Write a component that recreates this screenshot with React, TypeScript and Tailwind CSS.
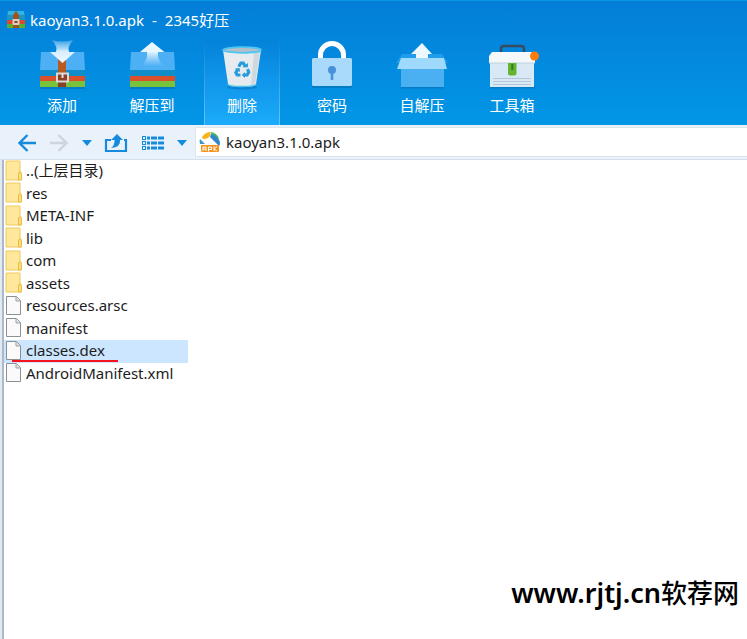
import React from "react";

const uiFont = "font-['Noto_Sans','Noto_Sans_CJK_SC',sans-serif]";

function AppIcon() {
  return (
    <svg viewBox="0 0 20 18" className="h-[18px] w-5 shrink-0" aria-hidden="true">
      <path d="M2 0h16l1 9H1z" fill="#2fb4e4" />
      <path d="M1 4h18v5H1z" fill="#1c95c4" />
      <path d="M1 9h18v4H1z" fill="#d94b2b" />
      <path d="M1 13h18v4H1z" fill="#55b02e" />
      <path d="M10 0L7 4v13h6V4z" fill="#a4521b" />
      <rect x="6.500" y="8" width="7" height="6" rx="1" fill="#d9cfc5" />
      <rect x="8.500" y="10" width="3" height="2" fill="#8b4a2c" />
    </svg>
  );
}

function ArchiveBody() {
  return (
    <>
      <rect x="8" y="38" width="45" height="2" fill="#0568a8" opacity="0.5" />
      <path d="M9 3h43l1 18H8z" fill="#4db0f5" />
      <path d="M8 21h45v6H8z" fill="#118dc9" />
      <path d="M8 27h45v5H8z" fill="#dc4f2b" />
      <path d="M8 32h45v6H8z" fill="#78c33b" />
    </>
  );
}

function AddIcon() {
  return (
    <svg viewBox="0 -10 60 52" className="h-[52px] w-[60px]" aria-hidden="true">
      <defs>
        <linearGradient id="down" x1="0" y1="0" x2="0" y2="1">
          <stop offset="0" stopColor="#bfe2ff" stopOpacity="0.3" />
          <stop offset="0.5" stopColor="#d8eeff" />
          <stop offset="1" stopColor="#eef9ff" />
        </linearGradient>
      </defs>
      <ArchiveBody />
      <path d="M26 10h8v28h-8z" fill="#b95b20" />
      <path d="M26 30h8v8h-8z" fill="#864127" />
      <path d="M20 -9Q30 -6 41 -9Q35 -2 37 3h6L30.500 14 18 3h6Q26 -2 20 -9z" fill="url(#down)" />
      <rect x="25" y="24.500" width="11" height="8" fill="#8c4028" stroke="#d8d8d5" strokeWidth="2" />
      <path d="M30.500 24v5" stroke="#e5e3df" strokeWidth="2" />
    </svg>
  );
}

function ExtractIcon() {
  return (
    <svg viewBox="0 -10 60 52" className="h-[52px] w-[60px]" aria-hidden="true">
      <defs>
        <linearGradient id="up" x1="0" y1="0" x2="0" y2="1">
          <stop offset="0.400" stopColor="#e8f6ff" />
          <stop offset="1" stopColor="#c8e8ff" stopOpacity="0" />
        </linearGradient>
      </defs>
      <ArchiveBody />
      <path d="M30 -7L42.500 3H36Q35 10 41 17H20Q26 10 25 3h-7z" fill="url(#up)" />
    </svg>
  );
}

function DeleteIcon() {
  return (
    <svg viewBox="0 -10 60 52" className="h-[52px] w-[60px]" aria-hidden="true">
      <ellipse cx="30" cy="38" rx="15" ry="2.500" fill="#086bb4" opacity="0.5" />
      <path d="M11 1l5 34q0 3 14 3t14-3l5-34z" fill="#e6ebef" />
      <path d="M42 3h6l-5 32-4 2z" fill="#d0d8df" />
      <path d="M16 35q0 2.500 14 2.500T44 35" fill="none" stroke="#4ec4ed" strokeWidth="1.500" />
      <ellipse cx="30" cy="1" rx="19" ry="2.800" fill="#b4bfc8" stroke="#50c6f2" strokeWidth="1.800" />
      <g transform="translate(5.200 3.600) scale(0.830)">
        <g fill="none" stroke="#299bdc" strokeWidth="3.800">
          <path d="M26 17l2.500-4.500h3L34 17" />
          <path d="M36.500 20l1.500 3.500-2 3.500h-4" />
          <path d="M28 27h-4l-1.500-3L25 20" />
        </g>
        <path d="M30.500 17.500h6.500v-5z" fill="#299bdc" />
        <path d="M33.500 23.500v7l-4-3.500z" fill="#299bdc" />
        <path d="M21 19.500l6-1 .5 5z" fill="#299bdc" />
      </g>
    </svg>
  );
}

function LockIcon() {
  return (
    <svg viewBox="0 -10 60 52" className="h-[52px] w-[60px]" aria-hidden="true">
      <rect x="10" y="10" width="40" height="29" rx="1" fill="#0568a8" opacity="0.5" />
      <path d="M18.500 12V6a11.500 11.500 0 0123 0v6" fill="none" stroke="#fff" strokeWidth="5" />
      <rect x="10" y="9" width="40" height="28" rx="1.500" fill="#a9dafc" />
      <circle cx="30" cy="21" r="4" fill="#4b91d7" />
      <path d="M28.700 23h2.600v8h-2.600z" fill="#4b91d7" />
    </svg>
  );
}

function SelfExtractIcon() {
  return (
    <svg viewBox="0 -10 60 52" className="h-[52px] w-[60px]" aria-hidden="true">
      <rect x="9" y="37" width="43" height="2.500" fill="#0568a8" opacity="0.5" />
      <path d="M4 14L10 5h40l6 9" fill="#209dea" />
      <path d="M9 10h43v28H9z" fill="#4ab0f2" />
      <path d="M30-6L40 5h-4v5H24V5h-5z" fill="#edf8ff" />
      <path d="M9 9h43l3 11H5z" fill="#9fd9fc" />
    </svg>
  );
}

function ToolboxIcon() {
  return (
    <svg viewBox="0 -10 60 52" className="h-[52px] w-[60px]" aria-hidden="true">
      <rect x="8" y="37" width="45" height="2.500" fill="#0568a8" opacity="0.5" />
      <path d="M19 5V0q0-3 3-3h17q3 0 3 3v5" fill="none" stroke="#374b61" strokeWidth="2.500" />
      <path d="M8 12h44v26H8z" fill="#d9e8f5" />
      <path d="M10 3h40l3 4v7H7V7z" fill="#f4f8fb" />
      <path d="M7 14h46" stroke="#bfd0de" />
      <path d="M11 29.500h38M11 32.500h38M11 35.500h38" stroke="#b5c7d6" />
      <path d="M26 14h8.500v10.500q0 2-2 2h-4.500q-2 0-2-2z" fill="#62b431" />
      <path d="M30.300 15v6" stroke="#2e7b22" strokeWidth="2" />
      <circle cx="52.500" cy="7" r="4.500" fill="#ff7d0b" />
    </svg>
  );
}

function FolderIcon() {
  return (
    <svg viewBox="0 0 17 21" className="h-[21px] w-[17px] shrink-0" aria-hidden="true">
      <path d="M1 1h14v11h1v8H1z" fill="#ffe79b" stroke="#efca5c" />
      <path d="M13.500 20v-6q0-2 1.500-2t1.500 2v6z" fill="#ffdd7a" stroke="#e8bc45" />
    </svg>
  );
}

function FileIcon() {
  return (
    <svg viewBox="0 0 17 21" className="h-[21px] w-[17px] shrink-0" aria-hidden="true">
      <path d="M1.500 1.500h10l4 4v14h-14z" fill="#fafafa" stroke="#8d9092" />
      <path d="M11 1.500V6h4.500" fill="#e2e4e5" stroke="#9da0a2" />
    </svg>
  );
}

function ApkIcon() {
  return (
    <svg viewBox="0 0 22 22" className="h-[22px] w-[22px] shrink-0" aria-hidden="true">
      <path d="M3 6Q6 1 12 1l-1 4q-2 3-5 3-3 0-3-2z" fill="#f6b621" />
      <path d="M12 1q6 1 8.500 7l-8-4z" fill="#4db46a" />
      <path d="M12 3q7 2 9 8 0 3-1 4L11 6z" fill="#2f86c8" />
      <path d="M1 8l5 5H1q-1-3 0-5z" fill="#3697cb" />
      <rect x="2" y="14" width="18" height="7" rx="1" fill="#f6941e" />
      <path d="M4 20v-4h3v4M4 18h3M9.500 20.500V16h3v2.500h-3M15 15.500V20M18 15.500l-3 2.500 3 2" fill="none" stroke="#fff" />
    </svg>
  );
}

function Caret() {
  return (
    <svg viewBox="0 0 10 6" className="h-[6px] w-[10px]" aria-hidden="true">
      <path d="M0 0h10L5 6z" fill="#168bdc" />
    </svg>
  );
}

const tools = [
  { label: "添加", Icon: AddIcon },
  { label: "解压到", Icon: ExtractIcon },
  { label: "删除", Icon: DeleteIcon, active: true },
  { label: "密码", Icon: LockIcon },
  { label: "自解压", Icon: SelfExtractIcon },
  { label: "工具箱", Icon: ToolboxIcon },
];

const entries = [
  { name: "..(上层目录)", folder: true },
  { name: "res", folder: true },
  { name: "META-INF", folder: true },
  { name: "lib", folder: true },
  { name: "com", folder: true },
  { name: "assets", folder: true },
  { name: "resources.arsc" },
  { name: "manifest" },
  { name: "classes.dex", selected: true },
  { name: "AndroidManifest.xml" },
];

export default function App() {
  return (
    <div className={`${uiFont} relative flex min-h-screen flex-col bg-white text-[15px] text-[#1c1c1c]`}>
      <header className="border-t border-[#0799e3] bg-linear-to-b from-[#047ed8] to-[#0296e6] text-white">
        <h1 className="flex h-[38px] items-center gap-1 pl-[6px] text-[15px] leading-5 font-normal">
          <AppIcon />
          <span className="flex gap-2">
            <span>kaoyan3.1.0.apk</span>
            <span>-</span>
            <span>2345好压</span>
          </span>
        </h1>
        <nav className="flex gap-[14px] pl-6" aria-label="工具栏">
          {tools.map(({ label, Icon, active }) => (
            <button
              key={label}
              type="button"
              className={`flex h-[86px] w-[76px] flex-col items-center ${
                active
                  ? "border-x bg-linear-to-b from-[#0482da] to-[#1cabfb] [border-image:linear-gradient(to_bottom,#0482da,#6cc6f8)_1]"
                  : ""
              }`}
            >
              <Icon />
              <span className="mt-[4px] text-[15px] leading-5">{label}</span>
            </button>
          ))}
        </nav>
      </header>

      <div className="flex h-[35px] items-center border-b border-[#d5dfeb] bg-[#e9f2fb]">
        <div className="flex w-[195px] shrink-0 items-center pt-px pl-[18px]">
          <button type="button" aria-label="后退">
            <svg viewBox="0 0 18 18" className="h-[18px] w-[18px]" aria-hidden="true">
              <path d="M9.500 1L1.500 9l8 8M2 9h16" fill="none" stroke="#168bdc" strokeWidth="2.400" />
            </svg>
          </button>
          <button type="button" aria-label="前进" className="ml-[14px]">
            <svg viewBox="0 0 18 18" className="h-[18px] w-[18px]" aria-hidden="true">
              <path d="M8.500 1l8 8-8 8M16 9H0" fill="none" stroke="#ced4dc" strokeWidth="2.400" />
            </svg>
          </button>
          <button type="button" aria-label="历史" className="ml-[14px]">
            <Caret />
          </button>
          <button type="button" aria-label="向上" className="ml-[12px]">
            <svg viewBox="0 0 24 18" className="h-[18px] w-6" aria-hidden="true">
              <path d="M7 6H2v11h20V6h-2" fill="none" stroke="#168bdc" strokeWidth="2.200" />
              <path d="M13 0l6 6h-3q1 7-9 8 4-3 3.500-8H7z" fill="#168bdc" />
            </svg>
          </button>
          <button type="button" aria-label="视图" className="ml-[13px]">
            <svg viewBox="0 0 24 16" className="h-4 w-6" aria-hidden="true">
              <g fill="none" stroke="#168bdc">
                {[1, 6, 11].map((y) => (
                  <React.Fragment key={y}>
                    <rect x="1.500" y={y + 0.5} width="3" height="3" />
                    <path d={`M6 ${y + 2}h3M10 ${y + 2}h6M17 ${y + 2}h6`} strokeWidth="3" />
                  </React.Fragment>
                ))}
              </g>
            </svg>
          </button>
          <button type="button" aria-label="视图选项" className="ml-[12px]">
            <Caret />
          </button>
        </div>
        <label className="flex h-[30px] min-w-0 flex-1 items-center gap-[5px] border border-r-0 border-[#dbe5f0] bg-white pl-[3px]">
          <ApkIcon />
          <input
            aria-label="路径"
            defaultValue="kaoyan3.1.0.apk"
            className="min-w-0 flex-1 bg-transparent text-[15px] leading-5 outline-none"
          />
        </label>
      </div>

      <main className="flex flex-1 border-l-2 border-[#e3e9f1]">
        <div className="flex-1 border-l-2 border-[#acb9cc]">
          <ul className="grid h-[225px] w-[184px] auto-rows-fr">
            {entries.map(({ name, folder, selected }) => (
              <li
                key={name}
                className={`relative flex items-center gap-1 pb-[2px] pl-px leading-5 whitespace-nowrap ${
                  selected ? "bg-[#cce6ff]" : ""
                }`}
              >
                {folder ? <FolderIcon /> : <FileIcon />}
                <span>{name}</span>
                {selected && <span className="absolute bottom-px left-2 h-[2px] w-[106px] bg-[#f5141e]" />}
              </li>
            ))}
          </ul>
        </div>
      </main>

      <p className="absolute right-2 bottom-7 text-[26px] leading-9 font-medium text-black">
        <span className="text-[27px] font-semibold">www.rjtj.cn</span>软荐网
      </p>
    </div>
  );
}
